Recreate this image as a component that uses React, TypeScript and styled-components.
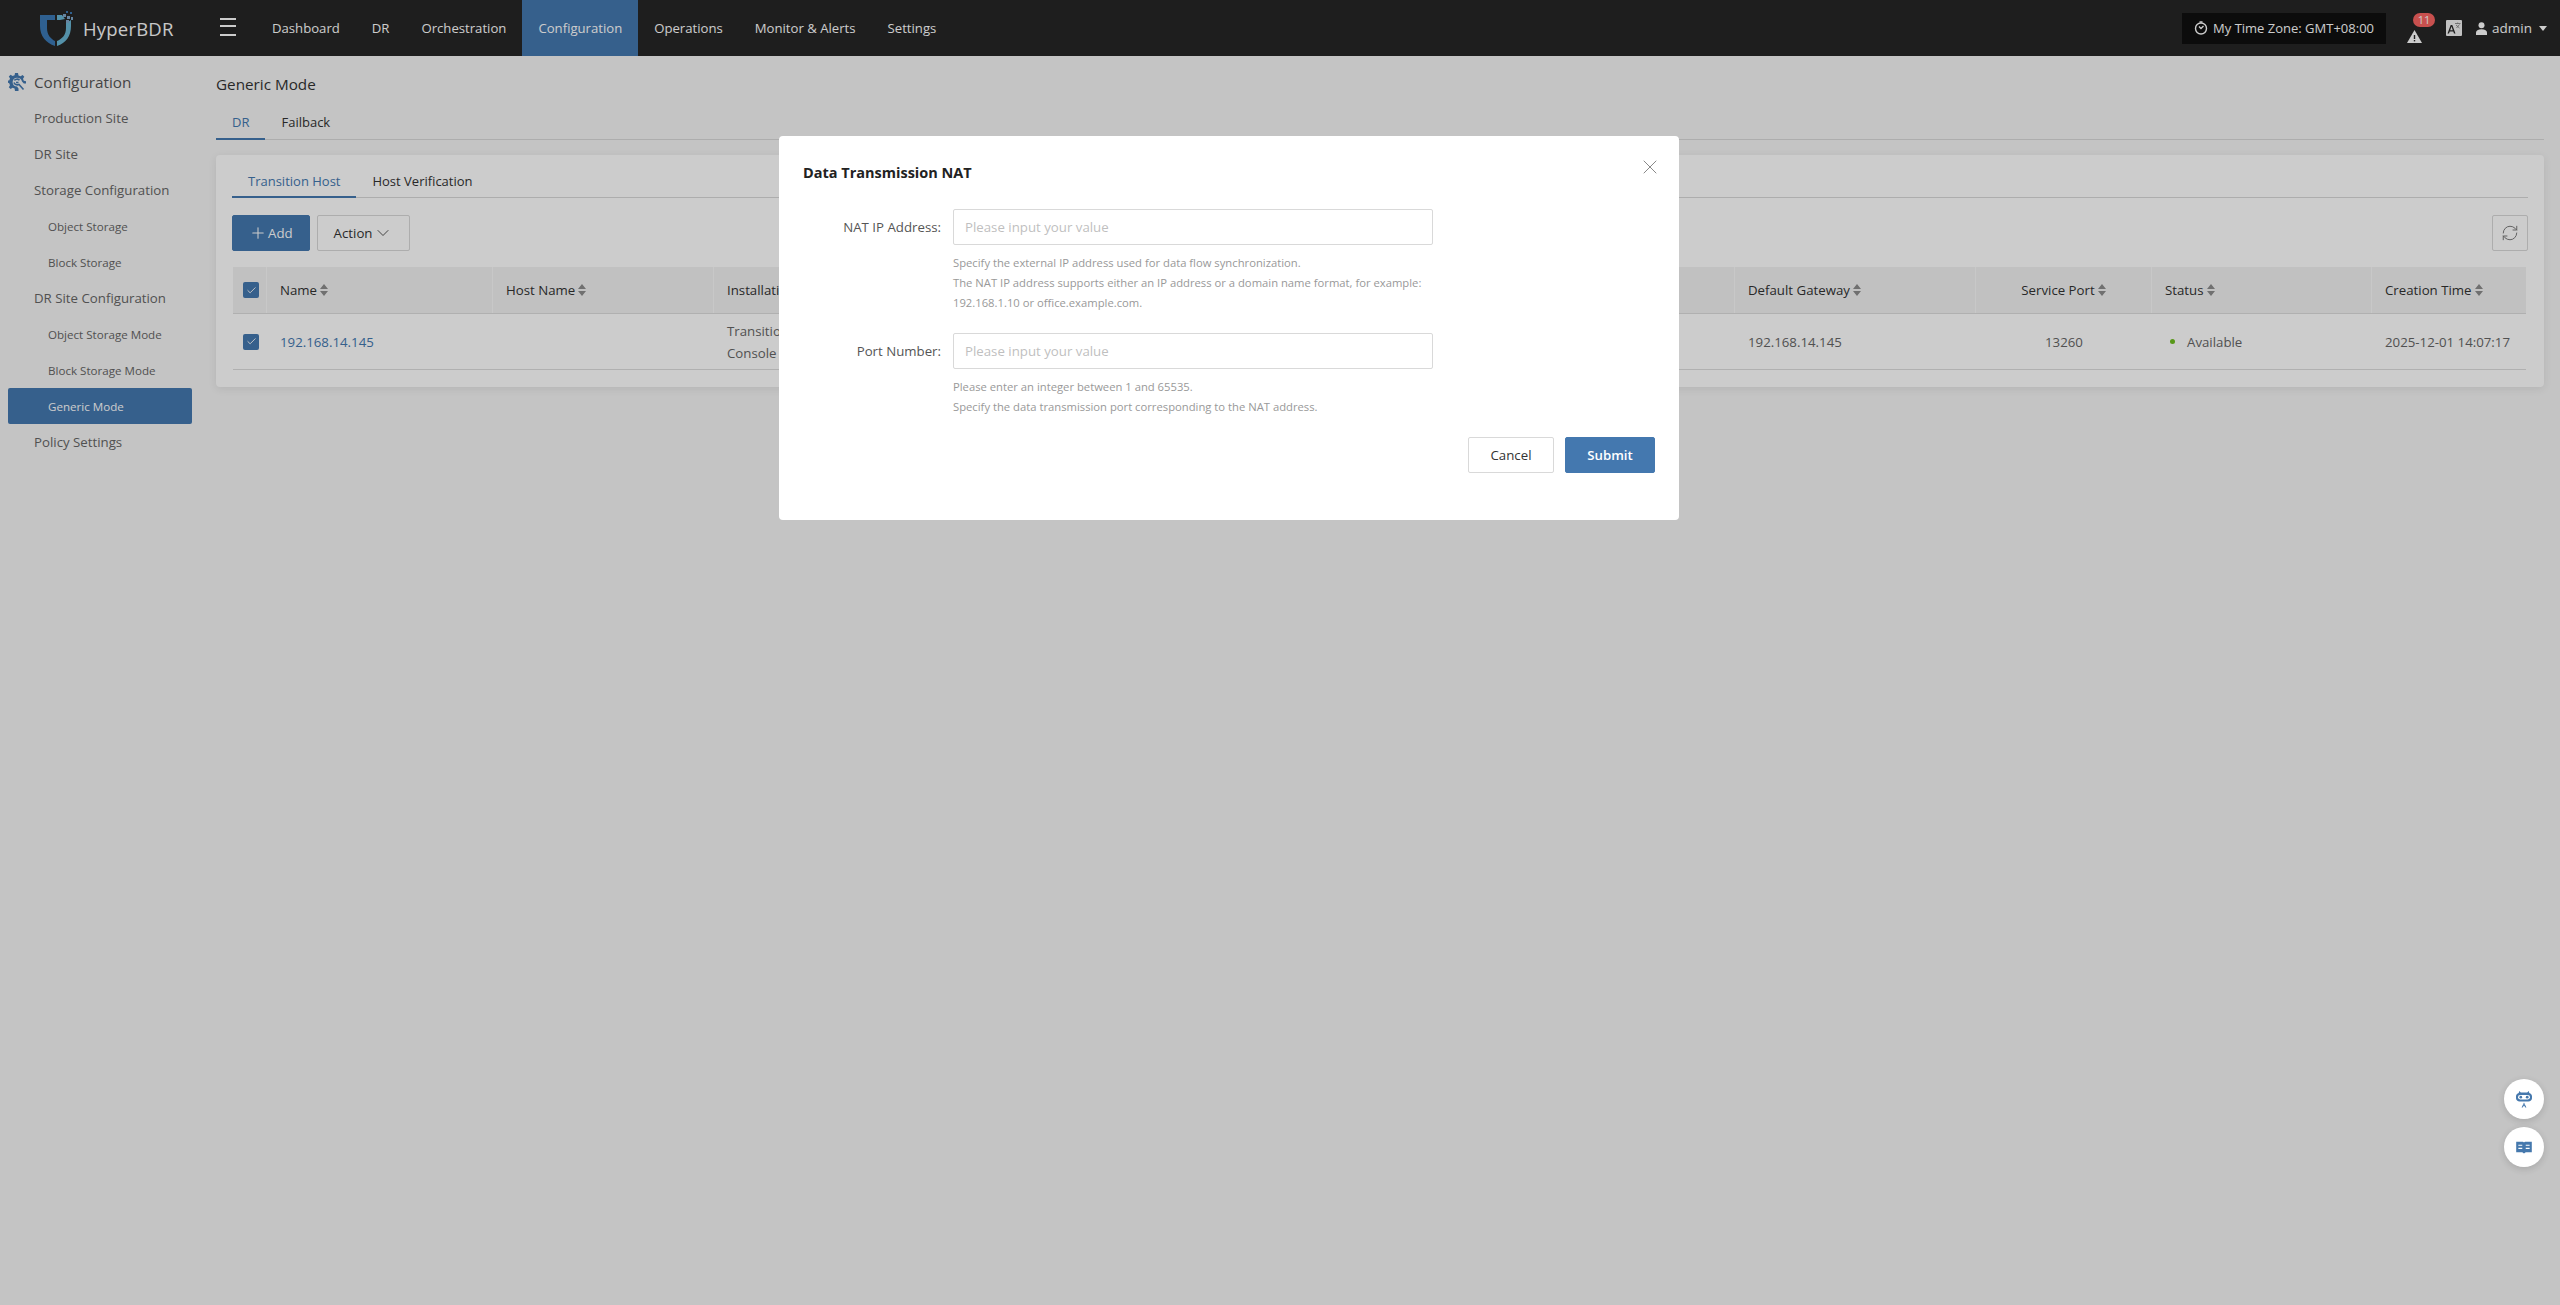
import React from 'react';
import styled, { createGlobalStyle } from 'styled-components';
import { ChevronDown, Plus, RefreshCw, Check, X } from 'lucide-react';

const GlobalStyle = createGlobalStyle`
  html, body {
    margin: 0;
    height: 100%;
    overflow: hidden;
    background: #f5f5f5;
    font-family: "Open Sans", "Noto Sans", sans-serif;
    font-size: 13.25px;
    color: #333;
  }
  * { box-sizing: border-box; }
`;

const Page = styled.div`
  height: 1305px;
  display: flex;
  flex-direction: column;
`;

const Header = styled.header`
  height: 56px;
  flex: none;
  background: #262626;
  display: flex;
  align-items: stretch;
  color: #fff;
`;

const Brand = styled.div`
  width: 220px;
  padding-left: 39px;
  display: flex;
  align-items: center;
  gap: 8px;
  font-size: 18.5px;
  font-weight: 500;
  color: #fafafa;
  letter-spacing: 0.2px;
`;

const Burger = styled.div`
  width: 16px;
  height: 18px;
  margin: 18px 20px 0 0;
  border-top: 2px solid #fff;
  border-bottom: 2px solid #fff;
  position: relative;
  &::after {
    content: '';
    position: absolute;
    left: 0;
    right: 0;
    top: 5px;
    height: 2px;
    background: #fff;
  }
`;

const Nav = styled.nav`
  display: flex;
  font-size: 13.15px;
`;

const NavItem = styled.a<{ $active?: boolean }>`
  display: flex;
  align-items: center;
  padding: 0 16px;
  background: ${(p) => (p.$active ? '#4478af' : 'transparent')};
  color: #fff;
`;

const HeaderRight = styled.div`
  margin-left: auto;
  display: flex;
  align-items: center;
  padding-right: 13px;
`;

const TimeZone = styled.div`
  width: 204px;
  height: 31px;
  margin-right: 21px;
  background: #0f0f0f;
  display: flex;
  align-items: center;
  justify-content: center;
  gap: 5px;
  font-size: 13px;
  white-space: nowrap;
`;

const AlertWrap = styled.div`
  position: relative;
  width: 28px;
  height: 30px;
  margin-right: 11px;
  display: flex;
  align-items: flex-end;
`;

const Badge = styled.span`
  position: absolute;
  left: 6px;
  top: 0;
  width: 22px;
  height: 14px;
  border-radius: 7px;
  background: #fb6462;
  font-size: 11px;
  line-height: 13px;
  text-align: center;
  color: #fff;
`;

const UserMenu = styled.div`
  margin-left: 14px;
  display: flex;
  align-items: center;
  gap: 5px;
  font-size: 13.5px;
`;

const Caret = styled.span`
  width: 0;
  height: 0;
  margin-left: 2px;
  border-left: 4px solid transparent;
  border-right: 4px solid transparent;
  border-top: 5px solid #fff;
`;

const Body = styled.div`
  flex: 1;
  display: flex;
  min-height: 0;
`;

const Sidebar = styled.aside`
  width: 216px;
  flex: none;
  padding: 8px 24px 0 8px;
`;

const SideTitle = styled.div`
  height: 36px;
  display: flex;
  align-items: center;
  gap: 8px;
  font-size: 15.25px;
  color: #555;
`;

const SideItem = styled.div<{ $sub?: boolean; $active?: boolean }>`
  height: 36px;
  display: flex;
  align-items: center;
  border-radius: 2px;
  padding-left: ${(p) => (p.$sub ? '40px' : '26px')};
  font-size: ${(p) => (p.$sub ? '11.6px' : '13.25px')};
  color: ${(p) => (p.$active ? '#fff' : '#666')};
  background: ${(p) => (p.$active ? '#4478af' : 'transparent')};
`;

const Main = styled.main`
  flex: 1;
  padding: 16px 16px 0 0;
  min-width: 0;
`;

const PageTitle = styled.h2`
  margin: 0;
  height: 24px;
  font-size: 15.25px;
  font-weight: 400;
  line-height: 24px;
  color: #333;
`;

const Tabs = styled.div<{ $height: number; $offset: number }>`
  display: flex;
  height: ${(p) => p.$height}px;
  padding-top: ${(p) => p.$offset}px;
  border-bottom: 1px solid #d9d9d9;
  font-size: 13px;
`;

const Tab = styled.div<{ $active?: boolean }>`
  padding: 0 16px;
  display: flex;
  align-items: center;
  margin-bottom: -1px;
  color: ${(p) => (p.$active ? '#4478af' : '#333')};
  border-bottom: 2px solid ${(p) => (p.$active ? '#4478af' : 'transparent')};
`;

const Card = styled.section`
  margin-top: 15px;
  height: 232px;
  padding: 8px 16px 0;
  background: #fff;
  border-radius: 4px;
  box-shadow: 0 2px 8px rgba(0, 0, 0, 0.08);
`;

const Toolbar = styled.div`
  display: flex;
  align-items: center;
  margin-top: 16px;
  height: 37px;
  gap: 7px;
`;

const Btn = styled.button<{ $primary?: boolean }>`
  height: 36px;
  padding: 0 16px;
  display: inline-flex;
  align-items: center;
  justify-content: center;
  gap: 1px;
  font: inherit;
  border-radius: 2px;
  border: 1px solid ${(p) => (p.$primary ? '#4478af' : '#d9d9d9')};
  background: ${(p) => (p.$primary ? '#4478af' : '#fff')};
  color: ${(p) => (p.$primary ? '#fff' : '#333')};
`;

const RefreshBtn = styled(Btn)`
  width: 36px;
  padding: 0;
  margin-left: auto;
  color: #777;
`;

const Table = styled.div`
  margin: 16px 2px 0 1px;
`;

const Row = styled.div<{ $head?: boolean }>`
  display: grid;
  grid-template-columns: 34px 226px 221px 1021px 241px 176px 220px 1fr;
  height: ${(p) => (p.$head ? '47px' : '56px')};
  background: ${(p) => (p.$head ? '#f2f2f2' : 'transparent')};
  border-bottom: 1px solid #dcdcdc;
  color: ${(p) => (p.$head ? '#333' : '#666')};
`;

const Cell = styled.div<{ $head?: boolean; $center?: boolean }>`
  display: flex;
  align-items: center;
  padding-left: ${(p) => (p.$center ? '0' : '13px')};
  white-space: nowrap;
  gap: 3px;
  justify-content: ${(p) => (p.$center ? 'center' : 'flex-start')};
  border-right: ${(p) => (p.$head ? '1px solid #fafafa' : 'none')};
  &:last-child { border-right: none; }
`;

const StackedCell = styled(Cell)`
  flex-direction: column;
  align-items: flex-start;
  justify-content: center;
  line-height: 22px;
  gap: 0;
`;

const CheckCell = styled.div<{ $head?: boolean }>`
  display: flex;
  align-items: center;
  padding-left: 10px;
  border-right: ${(p) => (p.$head ? '1px solid #fafafa' : 'none')};
`;

const CheckBox = styled.span`
  width: 16px;
  height: 16px;
  border-radius: 2px;
  background: #4478af;
  color: #fff;
  display: flex;
  align-items: center;
  justify-content: center;
`;

const LinkText = styled.a`
  color: #4478af;
`;

const StatusDot = styled.span`
  width: 5px;
  height: 5px;
  margin: 0 9px 0 5px;
  border-radius: 50%;
  background: #6ebe1f;
`;

const Overlay = styled.div`
  position: fixed;
  inset: 0;
  padding: 136px 102px 0 0;
  background: rgba(0, 0, 0, 0.2);
  display: flex;
  justify-content: center;
  align-items: flex-start;
`;

const Modal = styled.div`
  width: 900px;
  height: 384px;
  padding: 24px;
  position: relative;
  background: #fff;
  border-radius: 4px;
`;

const ModalTitle = styled.h3`
  margin: 0 0 24px;
  height: 25px;
  font-size: 14.5px;
  font-weight: 700;
  line-height: 25px;
  color: #222;
`;

const CloseBtn = styled.span`
  position: absolute;
  top: 19px;
  right: 17px;
  color: #888;
  display: flex;
`;

const FormRow = styled.div`
  display: grid;
  grid-template-columns: 150px 480px;
  margin-bottom: 20px;
`;

const FormLabel = styled.label`
  height: 36px;
  padding-right: 12px;
  display: flex;
  align-items: center;
  justify-content: flex-end;
  color: #555;
`;

const Input = styled.input`
  height: 36px;
  padding: 0 11px;
  font: inherit;
  border: 1px solid #d9d9d9;
  border-radius: 2px;
  outline: none;
  &::placeholder { color: #bfbfbf; }
`;

const Help = styled.div`
  grid-column: 2;
  margin-top: 8px;
  font-size: 11.25px;
  line-height: 20px;
  color: #999;
`;

const ModalFooter = styled.div`
  display: flex;
  justify-content: flex-end;
  gap: 11px;
`;

const FooterBtn = styled(Btn)<{ $w: number }>`
  width: ${(p) => p.$w}px;
  padding: 0;
  font-weight: ${(p) => (p.$primary ? 600 : 400)};
`;

const FloatStack = styled.div`
  position: fixed;
  top: 1079px;
  right: 16px;
  display: flex;
  flex-direction: column;
  gap: 8px;
`;

const FloatBtn = styled.div`
  width: 40px;
  height: 40px;
  border-radius: 50%;
  background: #fff;
  display: flex;
  align-items: center;
  justify-content: center;
  box-shadow: 0 2px 8px rgba(0, 0, 0, 0.15);
`;

const Logo = () => (
  <svg width="36" height="38" viewBox="0 0 36 38">
    <path d="M1 6H16V11H8V19C8 26 12 30 16 32V37C7 34 1 27 1 17Z" fill="#3b79b4" />
    <path d="M18 37V32C23 30 27 26 27 19V14L32 11V17C32 27 27 34 18 37Z" fill="#69b6d4" />
    <path d="M18 6H23L26 10L21 11H18Z" fill="#69b6d4" />
    <g fill="#7fa6c9">
      <rect x="24" y="5" width="3" height="3" />
      <rect x="28" y="7" width="3" height="3" />
      <rect x="27" y="11" width="3" height="3" />
      <rect x="31" y="3" width="2" height="2" fill="#3b79b4" />
      <rect x="27" y="2" width="2" height="2" fill="#3b79b4" />
      <rect x="32" y="8" width="2" height="3" />
    </g>
  </svg>
);

const SortIcon = () => (
  <svg width="8" height="12" viewBox="0 0 8 12">
    <path d="M4 0L8 5H0ZM0 7H8L4 12Z" fill="#8c8c8c" />
  </svg>
);

const ClockIcon = () => (
  <svg width="14" height="14" viewBox="0 0 14 14" fill="none" stroke="#fff" strokeWidth="1.4">
    <circle cx="7" cy="7.5" r="5.5" />
    <path d="M5 5.5L7 7.5L9.5 5M5.5 1H8.5" />
  </svg>
);

const AlertIcon = () => (
  <svg width="15" height="13" viewBox="0 0 15 13">
    <path d="M7.5 0L15 13H0Z" fill="#fff" />
    <rect x="6.8" y="5" width="1.4" height="4" fill="#262626" />
    <rect x="6.8" y="10" width="1.4" height="1.4" fill="#262626" />
  </svg>
);

const TranslateIcon = () => (
  <svg width="16" height="16" viewBox="0 0 16 16">
    <rect width="16" height="16" rx="1" fill="#f2f2f2" />
    <path d="M1.5 13.5L4.7 5H6.3L9.5 13.5H8L7.3 11.5H3.7L3 13.5ZM4.2 10.2H6.8L5.5 6.6Z" fill="#262626" />
    <path d="M9 3.5H14.5M11.7 2.5V3.5M10 5L13.5 8M13.5 4.5L10.5 8" stroke="#777" strokeWidth="0.8" fill="none" />
  </svg>
);

const UserIcon = () => (
  <svg width="11" height="13" viewBox="0 0 11 13" fill="#fff">
    <circle cx="5.5" cy="3.2" r="3" />
    <path d="M0 13V10.5C0 8.5 2 7.2 5.5 7.2S11 8.5 11 10.5V13Z" />
  </svg>
);

const GearIcon = () => (
  <svg width="18" height="18" viewBox="0 0 18 18">
    <path
      d="M7 0H10L10.5 2.4L12.6 3.2L14.6 1.9L16.3 3.8L15 5.7L15.8 7.8L18 8.2V10.5H15.8L14 8.6C13.6 6.2 11.6 4.8 9 4.8C6.4 4.8 4.6 6.8 4.6 9.2C4.6 11.8 6.6 13.6 9 13.6L10.5 15.5V18H7L6.6 15.6L4.5 14.8L2.6 16L0.8 14.2L2 12.2L1.2 10.2L0 9.8V7.6L1.2 7.4L2 5.4L0.8 3.6L2.6 1.8L4.6 3.1L6.6 2.3Z"
      fill="#4478af"
    />
    <path d="M6.5 7.5C7 6 10 5.6 11.5 7.2M6 9.5C6.5 11.5 9 12.5 11 11.5L15.5 16.5" stroke="#4478af" strokeWidth="1.6" fill="none" />
    <path d="M8 9.5H10.5" stroke="#4478af" strokeWidth="1.6" />
  </svg>
);

const RobotIcon = () => (
  <svg width="16" height="18" viewBox="0 0 20 22">
    <path d="M4 1L6 3H14L16 1L16.6 3.4C18.6 4 20 5.4 20 7.5V10C20 12.4 18 14 15.5 14H4.5C2 14 0 12.4 0 10V7.5C0 5.4 1.4 4 3.4 3.4Z" fill="#4578ad" />
    <rect x="2.5" y="6" width="15" height="5.5" rx="2.7" fill="#fff" />
    <circle cx="6" cy="8.7" r="1.7" fill="#4578ad" />
    <circle cx="14" cy="8.7" r="1.7" fill="#4578ad" />
    <path d="M10 15.5L13 21.5H11.6L11 20H9L8.4 21.5H7ZM9.5 18.8H10.5L10 17.4Z" fill="#4578ad" />
  </svg>
);

const BookIcon = () => (
  <svg width="16" height="13" viewBox="0 0 18 15">
    <path d="M0 1H7.5C8.2 1 8.8 1.3 9 1.8C9.2 1.3 9.8 1 10.5 1H18V13H11L9 14.5L7 13H0Z" fill="#4578ad" />
    <path d="M2.5 5H7M2.5 8.5H7M11 5H15.5M11 8.5H15.5" stroke="#fff" strokeWidth="1.2" />
  </svg>
);

const navItems = ['Dashboard', 'DR', 'Orchestration', 'Configuration', 'Operations', 'Monitor & Alerts', 'Settings'];

const sideItems = [
  { label: 'Production Site' },
  { label: 'DR Site' },
  { label: 'Storage Configuration' },
  { label: 'Object Storage', sub: true },
  { label: 'Block Storage', sub: true },
  { label: 'DR Site Configuration' },
  { label: 'Object Storage Mode', sub: true },
  { label: 'Block Storage Mode', sub: true },
  { label: 'Generic Mode', sub: true, active: true },
  { label: 'Policy Settings' },
];

const columns = [
  { label: 'Name' },
  { label: 'Host Name' },
  { label: 'Installation Method' },
  { label: 'Default Gateway' },
  { label: 'Service Port', center: true },
  { label: 'Status' },
  { label: 'Creation Time' },
];

const App: React.FC = () => {
  return (
    <Page>
      <GlobalStyle />
      <Header>
        <Brand>
          <Logo />
          HyperBDR
        </Brand>
        <Burger />
        <Nav>
          {navItems.map((item) => (
            <NavItem key={item} $active={item === 'Configuration'}>
              {item}
            </NavItem>
          ))}
        </Nav>
        <HeaderRight>
          <TimeZone>
            <ClockIcon />
            My Time Zone: GMT+08:00
          </TimeZone>
          <AlertWrap>
            <AlertIcon />
            <Badge>11</Badge>
          </AlertWrap>
          <TranslateIcon />
          <UserMenu>
            <UserIcon />
            admin
            <Caret />
          </UserMenu>
        </HeaderRight>
      </Header>
      <Body>
        <Sidebar>
          <SideTitle>
            <GearIcon />
            Configuration
          </SideTitle>
          {sideItems.map((item) => (
            <SideItem key={item.label} $sub={item.sub} $active={item.active}>
              {item.label}
            </SideItem>
          ))}
        </Sidebar>
        <Main>
          <PageTitle>Generic Mode</PageTitle>
          <Tabs $height={44} $offset={10}>
            <Tab $active>DR</Tab>
            <Tab>Failback</Tab>
          </Tabs>
          <Card>
            <Tabs $height={35} $offset={3}>
              <Tab $active>Transition Host</Tab>
              <Tab>Host Verification</Tab>
            </Tabs>
            <Toolbar>
              <Btn $primary>
                <Plus size={18} strokeWidth={1.4} />
                Add
              </Btn>
              <Btn>
                Action
                <ChevronDown size={20} strokeWidth={1} />
              </Btn>
              <RefreshBtn>
                <RefreshCw size={18} strokeWidth={1.3} />
              </RefreshBtn>
            </Toolbar>
            <Table>
              <Row $head>
                <CheckCell $head>
                  <CheckBox>
                    <Check size={11} strokeWidth={2} />
                  </CheckBox>
                </CheckCell>
                {columns.map((col) => (
                  <Cell key={col.label} $head $center={col.center}>
                    {col.label}
                    <SortIcon />
                  </Cell>
                ))}
              </Row>
              <Row>
                <CheckCell>
                  <CheckBox>
                    <Check size={11} strokeWidth={2} />
                  </CheckBox>
                </CheckCell>
                <Cell>
                  <LinkText>192.168.14.145</LinkText>
                </Cell>
                <Cell />
                <StackedCell>
                  <span>Transition Host</span>
                  <span>Console Installation</span>
                </StackedCell>
                <Cell>192.168.14.145</Cell>
                <Cell $center>13260</Cell>
                <Cell>
                  <StatusDot />
                  Available
                </Cell>
                <Cell>2025-12-01 14:07:17</Cell>
              </Row>
            </Table>
          </Card>
        </Main>
      </Body>
      <Overlay>
        <Modal>
          <ModalTitle>Data Transmission NAT</ModalTitle>
          <CloseBtn>
            <X size={24} strokeWidth={1} />
          </CloseBtn>
          <FormRow>
            <FormLabel>NAT IP Address:</FormLabel>
            <Input placeholder="Please input your value" />
            <Help>
              Specify the external IP address used for data flow synchronization.
              <br />
              The NAT IP address supports either an IP address or a domain name format, for example:
              <br />
              192.168.1.10 or office.example.com.
            </Help>
          </FormRow>
          <FormRow>
            <FormLabel>Port Number:</FormLabel>
            <Input placeholder="Please input your value" />
            <Help>
              Please enter an integer between 1 and 65535.
              <br />
              Specify the data transmission port corresponding to the NAT address.
            </Help>
          </FormRow>
          <ModalFooter>
            <FooterBtn $w={86}>Cancel</FooterBtn>
            <FooterBtn $w={90} $primary>
              Submit
            </FooterBtn>
          </ModalFooter>
        </Modal>
      </Overlay>
      <FloatStack>
        <FloatBtn>
          <RobotIcon />
        </FloatBtn>
        <FloatBtn>
          <BookIcon />
        </FloatBtn>
      </FloatStack>
    </Page>
  );
};

export default App;
